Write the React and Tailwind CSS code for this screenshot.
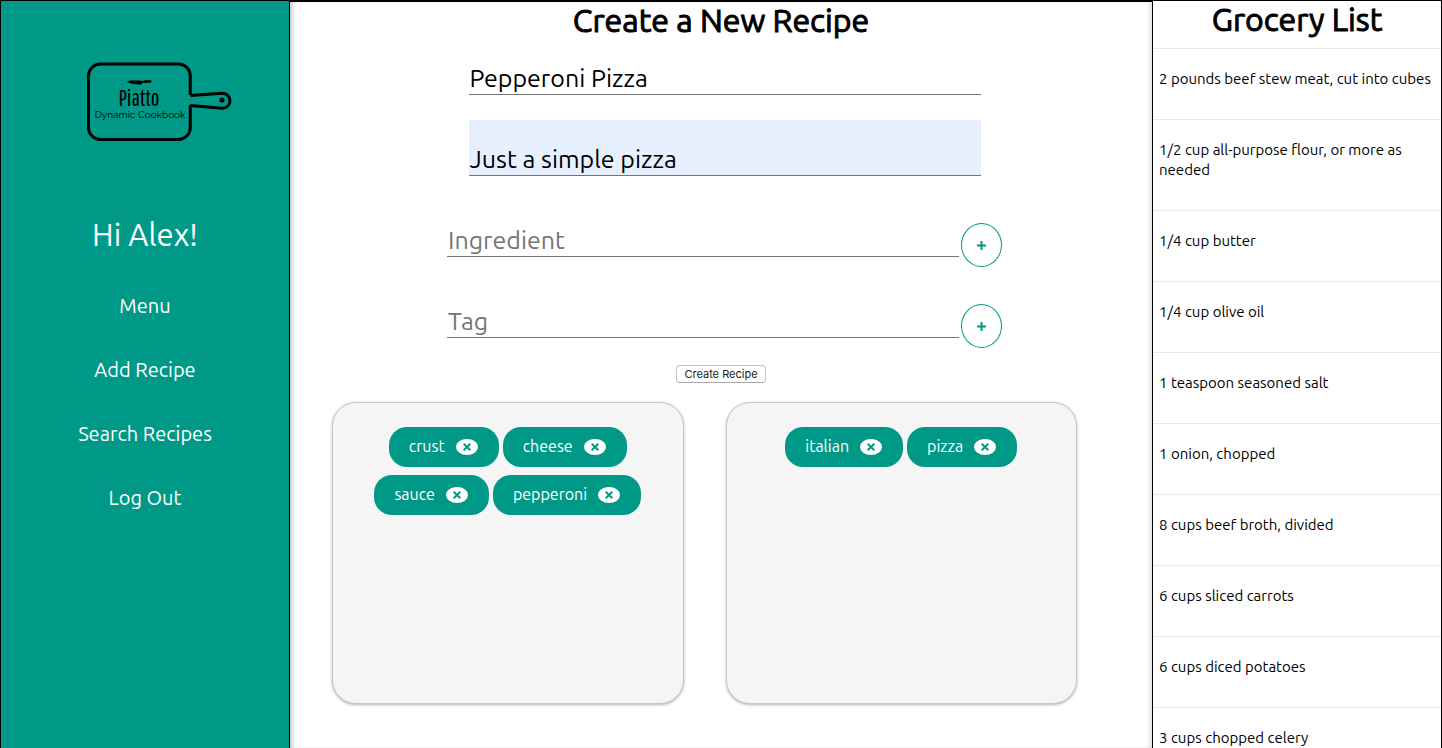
import { useState } from "react";

const groceries = [
  "2 pounds beef stew meat, cut into cubes",
  "1/2 cup all-purpose flour, or more as needed",
  "1/4 cup butter",
  "1/4 cup olive oil",
  "1 teaspoon seasoned salt",
  "1 onion, chopped",
  "8 cups beef broth, divided",
  "6 cups sliced carrots",
  "6 cups diced potatoes",
  "3 cups chopped celery",
];

function Logo() {
  return (
    <svg width="148" height="82" viewBox="0 0 148 82" role="img" aria-label="Piatto Dynamic Cookbook">
      <g fill="none" stroke="#000" strokeWidth="3" strokeLinejoin="round">
        <path d="M105.300 34V15a12 12 0 0 0-12-12H15.500A12 12 0 0 0 3.500 15v51.500a12 12 0 0 0 12 12h77.800a12 12 0 0 0 12-12V44" />
        <path d="M105.300 34.500 137 32.300A7.500 7.500 0 0 1 145 39.700A7.500 7.500 0 0 1 137 47.300L105.300 44.500" />
      </g>
      <circle cx="137" cy="39" r="2.600" />
      <path d="M41.500 21 45 19.600H54L57 20 60 19.200H65.500Q67 19.300 66.700 20.800L65 21.800 56.500 22V23.600Q48 23.800 41.500 21Z" />
      <text x="54" y="45" textAnchor="middle" className="font-['Pathway_Gothic_One','Antonio','Oswald','Ubuntu_Condensed','Liberation_Sans_Narrow',sans-serif] text-[23px]">
        Piatto
      </text>
      <text x="55" y="57" textAnchor="middle" className="font-['Raleway','Lato',sans-serif] text-[10px]">
        Dynamic Cookbook
      </text>
    </svg>
  );
}

function Field({ id, label, value, onChange, filled, onAdd }) {
  return (
    <div className="flex h-[56px] items-start justify-center gap-[2px]">
      <input
        id={id}
        aria-label={label}
        placeholder={label}
        value={value}
        onChange={(e) => onChange(e.target.value)}
        className={
          "h-[56px] w-[512px] min-w-0 border-b border-[#757575] px-px pt-[24px] pb-[2px] text-[25px] leading-[29px] text-black outline-none placeholder:text-[#757575] " +
          (filled ? "bg-[#e6f0ff]" : "bg-transparent")
        }
      />
      {onAdd && (
        <button
          type="button"
          aria-label={"Add " + label}
          onClick={onAdd}
          className="mt-[22px] flex h-[44px] w-[41px] shrink-0 items-center justify-center rounded-[50%] border border-[#009987] text-[#009987]"
        >
          <svg width="9" height="9" viewBox="0 0 9 9" stroke="currentColor" strokeWidth="2">
            <path d="M4.500 0v9M0 4.500h9" />
          </svg>
        </button>
      )}
    </div>
  );
}

function TagCard({ items, onRemove }) {
  return (
    <ul className="flex h-[302px] flex-wrap content-start justify-center gap-x-1 gap-y-2 rounded-[24px] border border-[#c8c8c8] bg-[#f5f5f5] px-6 pt-6 shadow-[0_1px_3px_rgba(0,0,0,0.3)]">
      {items.map((item) => (
        <li key={item} className="flex h-10 items-center rounded-[18px] bg-[#009987] pr-[21px] pl-5 text-[16px] text-white">
          <span className="pb-[2px]">{item}</span>
          <button
            type="button"
            aria-label={"Remove " + item}
            onClick={() => onRemove(item)}
            className="ml-[11px] flex h-4 w-[22px] items-center justify-center rounded-[50%] bg-white text-[#009987]"
          >
            <svg width="8" height="8" viewBox="0 0 8 8" stroke="currentColor" strokeWidth="2">
              <path d="M.7.7l6.600 6.600M7.300.7L.7 7.300" />
            </svg>
          </button>
        </li>
      ))}
    </ul>
  );
}

export default function App() {
  const [name, setName] = useState("Pepperoni Pizza");
  const [description, setDescription] = useState("Just a simple pizza");
  const [ingredient, setIngredient] = useState("");
  const [tag, setTag] = useState("");
  const [ingredients, setIngredients] = useState(["crust", "cheese", "sauce", "pepperoni"]);
  const [tags, setTags] = useState(["italian", "pizza"]);

  const add = (value, setValue, setList) => {
    if (value) setList((list) => [...list, value]);
    setValue("");
  };

  return (
    <div className="grid h-screen grid-cols-[1fr_3fr_1fr] overflow-hidden border-x border-t border-black bg-white font-['Ubuntu','Noto_Sans',sans-serif] text-black">
      <aside className="flex flex-col items-center bg-[#009987] pt-[60px] text-white">
        <div className="pl-[28px] text-black">
          <Logo />
        </div>
        <h2 className="mt-[72px] text-[31px] leading-[40px]">Hi Alex!</h2>
        <nav className="mt-[37px] flex flex-col items-center gap-[36px] text-[20px] leading-[28px]">
          <a href="#menu">Menu</a>
          <a href="#add">Add Recipe</a>
          <a href="#search">Search Recipes</a>
          <a href="#logout">Log Out</a>
        </nav>
      </aside>

      <main className="min-w-0 border-x border-t border-black shadow-[inset_5px_0_5px_-3px_rgba(0,0,0,0.25),inset_-5px_0_5px_-3px_rgba(0,0,0,0.15)]">
        <h1 className="text-center text-[32px] leading-[37px] [-webkit-text-stroke:1px_black]">Create a New Recipe</h1>
        <form onSubmit={(e) => e.preventDefault()}>
          <div className="flex flex-col gap-[25px] pl-[7px]">
            <Field id="name" label="Name" value={name} onChange={setName} />
            <Field id="description" label="Description" value={description} onChange={setDescription} filled />
            <Field id="ingredient" label="Ingredient" value={ingredient} onChange={setIngredient} onAdd={() => add(ingredient, setIngredient, setIngredients)} />
            <Field id="tag" label="Tag" value={tag} onChange={setTag} onAdd={() => add(tag, setTag, setTags)} />
          </div>
          <button
            type="submit"
            className="mx-auto mt-[27px] block h-[18px] rounded-[4px] border border-[#c4c4c4] border-b-[#a8a8a8] bg-white px-[7px] font-['Inter',sans-serif] text-[11px] leading-[16px] text-[#222222]"
          >
            Create Recipe
          </button>
        </form>
        <section className="mt-[19px] grid grid-cols-2 gap-[42px] pr-[75px] pl-[42px]">
          <TagCard items={ingredients} onRemove={(item) => setIngredients(ingredients.filter((i) => i !== item))} />
          <TagCard items={tags} onRemove={(item) => setTags(tags.filter((i) => i !== item))} />
        </section>
      </main>

      <section className="min-w-0 overflow-hidden">
        <h1 className="h-[47px] text-center text-[32px] leading-[37px] [-webkit-text-stroke:1px_black]">Grocery List</h1>
        <ul>
          {groceries.map((item) => (
            <li key={item} className="border-t border-[#e8e8e8] pt-5 pr-[2px] pb-[30px] pl-[6px] text-[15px] leading-[20px]">
              {item}
            </li>
          ))}
        </ul>
      </section>
    </div>
  );
}
